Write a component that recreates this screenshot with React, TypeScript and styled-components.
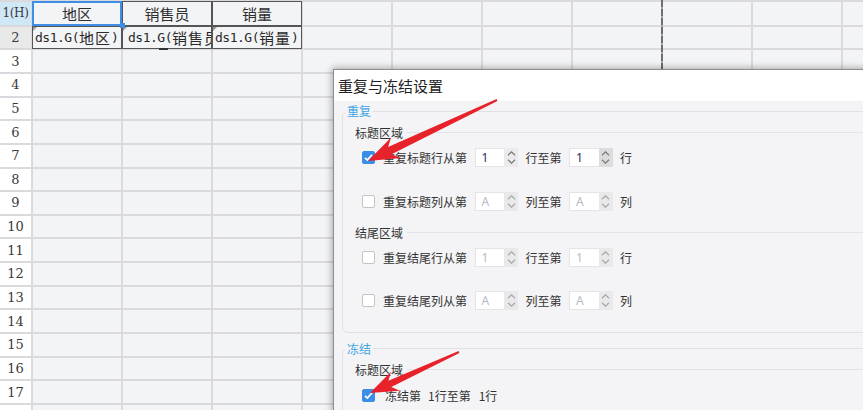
import React from "react";
import styled, { createGlobalStyle } from "styled-components";

const Global = createGlobalStyle`
  html, body { margin: 0; padding: 0; background: #fff; }
  body {
    width: 863px; height: 410px; overflow: hidden;
    font-family: "Noto Sans CJK SC", "Noto Sans", sans-serif;
  }
`;

const Page = styled.div`
  position: relative;
  width: 863px;
  height: 410px;
  overflow: hidden;
`;

/* ---------- spreadsheet ---------- */

const Sheet = styled.div`
  position: relative;
  display: grid;
  grid-template-columns: 31px repeat(10, 88px);
  grid-template-rows: 22.7px;
  grid-auto-rows: 21.65px;
  gap: 2px;
  padding-top: 2px;
  background: #dadadc;
  width: max-content;
`;

type Tone = "sel" | "ref" | "plain";

const RowHead = styled.div<{ $tone: Tone }>`
  display: flex;
  align-items: center;
  justify-content: center;
  background: ${(p) =>
    p.$tone === "sel" ? "#cfe8f8" : p.$tone === "ref" ? "#e9e9ea" : "#ffffff"};
  font: ${(p) => (p.$tone === "sel" ? "12px" : "13px")} "DejaVu Serif",
    "Liberation Serif", serif;
  letter-spacing: ${(p) => (p.$tone === "sel" ? "-0.4px" : "0")};
  color: #3a3a3a;
  white-space: nowrap;
  overflow: hidden;
`;

const Cell = styled.div<{ $report?: boolean; $selected?: boolean }>`
  position: relative;
  min-width: 0;
  background: #f3f4f6;
  box-shadow: ${(p) => (p.$report ? "0 0 0 1px #555" : "none")};
  outline: ${(p) => (p.$selected ? "2px solid #3f8de4" : "none")};
  outline-offset: -1px;
  z-index: ${(p) => (p.$selected ? 2 : p.$report ? 1 : 0)};
`;

const HeadText = styled.div`
  height: 100%;
  display: flex;
  align-items: center;
  justify-content: center;
  font-size: 15px;
  color: #2e2e2e;
`;

const RefText = styled.div<{ $indent?: number }>`
  height: 100%;
  display: flex;
  align-items: center;
  padding-left: ${(p) => p.$indent ?? 2}px;
  overflow: hidden;
  white-space: nowrap;
  font: 13px "DejaVu Sans Mono", "Liberation Mono", monospace;
  letter-spacing: -0.5px;
  color: #2a2a2a;
`;

const Han = styled.span`
  font-family: "Noto Sans CJK SC", sans-serif;
  font-size: 15px;
  letter-spacing: 1px;
`;

const Corner = styled.span`
  position: absolute;
  left: 0;
  top: 0;
  width: 0;
  height: 0;
  border-top: 4px solid #9a9a9a;
  border-right: 4px solid transparent;
`;

const Handle = styled.span`
  position: absolute;
  right: -4px;
  bottom: -3px;
  width: 5px;
  height: 5px;
  background: #3f8de4;
`;

const Flag = styled.span`
  position: absolute;
  left: 36px;
  bottom: -2px;
  width: 9px;
  height: 2px;
  background: #333;
`;

const PageBreak = styled.div`
  position: absolute;
  left: 661px;
  top: 0;
  bottom: 0;
  width: 2px;
  background: repeating-linear-gradient(
    to bottom,
    #6e6e6e 0 7px,
    #a9a9a9 7px 9px
  );
  z-index: 3;
`;

/* ---------- dialog ---------- */

const Dialog = styled.div`
  position: absolute;
  left: 333px;
  top: 69px;
  width: 560px;
  height: 370px;
  display: flex;
  flex-direction: column;
  background: #f4f4f6;
  border: 1px solid #8e8e8e;
  box-shadow: 0 0 7px 1px rgba(0, 0, 0, 0.32);
  z-index: 5;
`;

const TitleBar = styled.div`
  flex: none;
  height: 31px;
  display: flex;
  align-items: center;
  padding-left: 4px;
  background: #fff;
  font-size: 15px;
  color: #222;
`;

const Body = styled.div`
  display: flex;
  flex-direction: column;
  gap: 8px;
  padding: 2px 0 0 8px;
`;

const Fieldset = styled.fieldset`
  margin: 0;
  min-width: 0;
  padding: 5px 0 21px 12px;
  border: 1px solid #e0e1e5;
  border-radius: 6px;
  display: flex;
  flex-direction: column;
`;

const Legend = styled.legend`
  margin-left: -10px;
  padding: 0 2px;
  font-size: 12px;
  line-height: 16px;
  color: #3fa6e2;
`;

const Group = styled.div<{ $spaceBefore?: number }>`
  display: flex;
  flex-direction: column;
  margin-top: ${(p) => p.$spaceBefore ?? 0}px;
`;

const GroupTitle = styled.div`
  display: flex;
  align-items: center;
  gap: 4px;
  height: 16px;
  font-size: 12px;
  color: #333;
  margin-bottom: 7.5px;
  &::after {
    content: "";
    flex: 1;
    height: 1px;
    background: #e2e3e7;
  }
`;

const OptionRow = styled.div<{ $spaceBefore?: number }>`
  display: flex;
  align-items: center;
  gap: 7.5px;
  height: 20px;
  padding-left: 7px;
  margin-top: ${(p) => p.$spaceBefore ?? 0}px;
  font-size: 12px;
  color: #333;
  white-space: nowrap;
`;

const Box = styled.span<{ $checked?: boolean; $after?: number }>`
  flex: none;
  box-sizing: border-box;
  width: 13px;
  height: 13px;
  margin-right: ${(p) => p.$after ?? 0.5}px;
  border-radius: 2px;
  background: ${(p) => (p.$checked ? "#3b8ee6" : "#fff")};
  border: 1px solid ${(p) => (p.$checked ? "#3b8ee6" : "#c4c4c4")};
  display: flex;
  align-items: center;
  justify-content: center;
`;

const Spin = styled.div`
  flex: none;
  display: flex;
  width: 43.5px;
  height: 19px;
`;

const SpinValue = styled.div<{ $disabled?: boolean }>`
  flex: 1;
  display: flex;
  align-items: center;
  padding-left: 6px;
  background: #fff;
  border: 1px solid #e4e4e6;
  border-right: none;
  font: 12px "Noto Sans", "Liberation Sans", sans-serif;
  color: ${(p) => (p.$disabled ? "#b4bbc7" : "#1f2d5c")};
`;

const SpinArrows = styled.div<{ $shade: "light" | "dark" | "off" }>`
  flex: none;
  width: 14px;
  display: flex;
  flex-direction: column;
  align-items: center;
  justify-content: center;
  gap: 3px;
  background: ${(p) =>
    p.$shade === "dark" ? "#dcdcde" : p.$shade === "light" ? "#ebebed" : "#e9e9eb"};
  color: ${(p) => (p.$shade === "off" ? "#a8a8a8" : "#7a7a7a")};
`;

const Chevron = ({ up }: { up?: boolean }) => (
  <svg width="9" height="5" viewBox="0 0 9 5" fill="none">
    <path
      d={up ? "M1 4.2 L4.5 0.8 L8 4.2" : "M1 0.8 L4.5 4.2 L8 0.8"}
      stroke="currentColor"
      strokeWidth="1.2"
    />
  </svg>
);

const Check = () => (
  <svg width="11" height="11" viewBox="0 0 11 11" fill="none">
    <path d="M2 5.8 L4.4 8.1 L9 2.8" stroke="#fff" strokeWidth="1.7" />
  </svg>
);

const Spinner = ({
  value,
  disabled,
  shade,
}: {
  value: string;
  disabled?: boolean;
  shade: "light" | "dark" | "off";
}) => (
  <Spin>
    <SpinValue $disabled={disabled}>{value}</SpinValue>
    <SpinArrows $shade={shade}>
      <Chevron up />
      <Chevron />
    </SpinArrows>
  </Spin>
);

const Gap = styled.span<{ $w: number }>`
  display: inline-block;
  width: ${(p) => p.$w}px;
`;

/* ---------- annotations ---------- */

const Annotations = styled.svg`
  position: absolute;
  left: 0;
  top: 0;
  pointer-events: none;
  z-index: 10;
`;

function arrowPoints(
  tx: number,
  ty: number,
  hx: number,
  hy: number,
  headLen: number,
  headHalf: number,
  neck: number,
  tail: number
) {
  const dx = hx - tx;
  const dy = hy - ty;
  const L = Math.hypot(dx, dy);
  const ux = dx / L;
  const uy = dy / L;
  const nx = -uy;
  const ny = ux;
  const bx = hx - ux * headLen;
  const by = hy - uy * headLen;
  const kx = hx - ux * headLen * 0.78;
  const ky = hy - uy * headLen * 0.78;
  const pts = [
    [tx + nx * tail, ty + ny * tail],
    [kx + nx * neck, ky + ny * neck],
    [bx + nx * headHalf, by + ny * headHalf],
    [hx, hy],
    [bx - nx * headHalf, by - ny * headHalf],
    [kx - nx * neck, ky - ny * neck],
    [tx - nx * tail, ty - ny * tail],
  ];
  return pts.map((p) => `${p[0].toFixed(1)},${p[1].toFixed(1)}`).join(" ");
}

/* ---------- data ---------- */

const heads = ["地区", "销售员", "销量"];
const refs = ["地区", "销售员", "销量"];
const indents = [2, 5, 2];
const ROWS = 18;
const COLS = 10;

export default function App() {
  const rows: React.ReactNode[] = [];
  for (let r = 0; r < ROWS; r++) {
    const tone: Tone = r === 0 ? "sel" : r === 1 ? "ref" : "plain";
    rows.push(
      <RowHead key={`h${r}`} $tone={tone}>
        {r === 0 ? "1(H)" : String(r + 1)}
      </RowHead>
    );
    for (let c = 0; c < COLS; c++) {
      const report = r < 2 && c < 3;
      const selected = r === 0 && c === 0;
      rows.push(
        <Cell key={`c${r}-${c}`} $report={report} $selected={selected}>
          {r === 0 && c < 3 && <HeadText>{heads[c]}</HeadText>}
          {r === 1 && c < 3 && (
            <>
              <RefText $indent={indents[c]}>
                ds1.G(<Han>{refs[c]}</Han>)
              </RefText>
              <Corner />
              {c === 1 && <Flag />}
            </>
          )}
          {selected && <Handle />}
        </Cell>
      );
    }
  }

  return (
    <Page>
      <Global />
      <Sheet>
        {rows}
        <PageBreak />
      </Sheet>

      <Dialog>
        <TitleBar>重复与冻结设置</TitleBar>
        <Body>
          <Fieldset>
            <Legend>重复</Legend>
            <Group>
              <GroupTitle>标题区域</GroupTitle>
              <OptionRow>
                <Box $checked>
                  <Check />
                </Box>
                <span>重复标题行从第</span>
                <Spinner value="1" shade="light" />
                <span>行至第</span>
                <Spinner value="1" shade="dark" />
                <span>行</span>
              </OptionRow>
              <OptionRow $spaceBefore={23.5}>
                <Box />
                <span>重复标题列从第</span>
                <Spinner value="A" disabled shade="off" />
                <span>列至第</span>
                <Spinner value="A" disabled shade="off" />
                <span>列</span>
              </OptionRow>
            </Group>
            <Group $spaceBefore={13}>
              <GroupTitle>结尾区域</GroupTitle>
              <OptionRow>
                <Box />
                <span>重复结尾行从第</span>
                <Spinner value="1" disabled shade="off" />
                <span>行至第</span>
                <Spinner value="1" disabled shade="off" />
                <span>行</span>
              </OptionRow>
              <OptionRow $spaceBefore={23}>
                <Box />
                <span>重复结尾列从第</span>
                <Spinner value="A" disabled shade="off" />
                <span>列至第</span>
                <Spinner value="A" disabled shade="off" />
                <span>列</span>
              </OptionRow>
            </Group>
          </Fieldset>

          <Fieldset>
            <Legend>冻结</Legend>
            <Group>
              <GroupTitle>标题区域</GroupTitle>
              <OptionRow>
                <Box $checked $after={2.5}>
                  <Check />
                </Box>
                <span>
                  冻结第<Gap $w={7} />1行至第<Gap $w={8} />1行
                </span>
              </OptionRow>
            </Group>
          </Fieldset>
        </Body>
      </Dialog>

      <Annotations width="863" height="410" viewBox="0 0 863 410">
        <polygon
          points={arrowPoints(497, 100, 368, 161, 31, 11.5, 4, 1)}
          fill="#e8222b"
        />
        <polygon
          points={arrowPoints(459, 352, 370, 393, 28, 10.5, 3.5, 1)}
          fill="#e8222b"
        />
      </Annotations>
    </Page>
  );
}
